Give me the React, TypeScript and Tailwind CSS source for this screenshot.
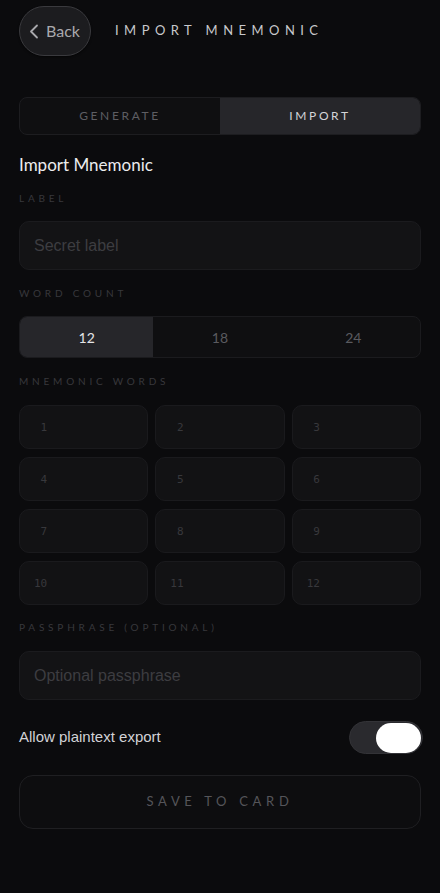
import React, { useState } from "react";

const HEAD = { fontFamily: "Lato, 'Noto Sans', sans-serif" };
const ARIAL = { fontFamily: "'Liberation Sans', Arial, sans-serif" };
const MONO = { fontFamily: "'DejaVu Sans Mono', 'Liberation Mono', monospace" };

function FieldLabel({ children }: { children: React.ReactNode }) {
  return (
    <div
      style={HEAD}
      className="text-[10px] leading-none tracking-[0.38em] text-[#38383c] uppercase"
    >
      {children}
    </div>
  );
}

export default function App() {
  const [mode, setMode] = useState<"generate" | "import">("import");
  const [count, setCount] = useState(12);
  const [plain, setPlain] = useState(true);

  return (
    <div className="min-h-[893px] w-[440px] bg-[#0b0b0d] px-[19px] pt-[6px]">
      {/* header */}
      <div className="flex items-center gap-[24px]">
        <button
          style={HEAD}
          className="flex h-[50px] w-[72px] items-center justify-center gap-[7px] rounded-full border border-[#3a3a3e] bg-[#1c1c1f] pr-[1px] text-[16px] text-[#a9a9ad] shadow-[0_1px_2px_rgba(0,0,0,0.6)]"
        >
          <svg width="10" height="15" viewBox="0 0 10 15" fill="none">
            <path d="M8 1.5 L2 7.5 L8 13.5" stroke="#a9a9ad" strokeWidth="1.8" strokeLinecap="round" strokeLinejoin="round" />
          </svg>
          Back
        </button>
        <div style={HEAD} className="text-[13px] tracking-[0.42em] text-[#c8c8cc]">
          IMPORT MNEMONIC
        </div>
      </div>

      {/* mode switch */}
      <div className="mt-[41px] grid h-[38px] grid-cols-2 overflow-hidden rounded-[8px] border border-[#1d1d20] bg-[#0f0f11]">
        <button
          onClick={() => setMode("generate")}
          style={HEAD}
          className={`text-[12px] tracking-[0.22em] ${mode === "generate" ? "bg-[#26262a] text-[#d4d4d8]" : "text-[#5e5e63]"}`}
        >
          GENERATE
        </button>
        <button
          onClick={() => setMode("import")}
          style={HEAD}
          className={`text-[12px] tracking-[0.22em] ${mode === "import" ? "bg-[#26262a] text-[#d4d4d8]" : "text-[#5e5e63]"}`}
        >
          IMPORT
        </button>
      </div>

      <div style={HEAD} className="mt-[21px] text-[17px] leading-none text-[#ececee]">
        Import Mnemonic
      </div>

      <div className="mt-[20px]">
        <FieldLabel>Label</FieldLabel>
      </div>
      <input
        placeholder="Secret label"
        style={ARIAL}
        className="mt-[18px] h-[49px] w-full rounded-[10px] border border-[#1b1b1e] bg-[#131315] px-[14px] text-[16px] text-[#d4d4d8] outline-none placeholder:text-[#3d3d41]"
      />

      <div className="mt-[18px]">
        <FieldLabel>Word count</FieldLabel>
      </div>
      <div className="mt-[18px] grid h-[42px] grid-cols-3 overflow-hidden rounded-[8px] border border-[#1b1b1e] bg-[#0f0f11]">
        {[12, 18, 24].map((n) => (
          <button
            key={n}
            onClick={() => setCount(n)}
            style={HEAD}
            className={`text-[14px] ${count === n ? "bg-[#26262a] text-[#e4e4e7]" : "text-[#5a5a5f]"}`}
          >
            {n}
          </button>
        ))}
      </div>

      <div className="mt-[18px]">
        <FieldLabel>Mnemonic words</FieldLabel>
      </div>
      <div className="mt-[19px] grid grid-cols-3 gap-x-[7px] gap-y-[8px]">
        {Array.from({ length: count }, (_, i) => (
          <input
            key={i}
            placeholder={String(i + 1).padStart(2, "\u00a0")}
            style={MONO}
            className="h-[44px] w-full rounded-[10px] border border-[#1a1a1d] bg-[#121214] px-[14px] text-[11px] text-[#d4d4d8] outline-none placeholder:text-[#38383c]"
          />
        ))}
      </div>

      <div className="mt-[17px]">
        <FieldLabel>Passphrase (optional)</FieldLabel>
      </div>
      <input
        placeholder="Optional passphrase"
        style={ARIAL}
        className="mt-[19px] h-[49px] w-full rounded-[10px] border border-[#1b1b1e] bg-[#131315] px-[14px] text-[16px] text-[#d4d4d8] outline-none placeholder:text-[#3d3d41]"
      />

      <div className="mt-[21px] flex items-center justify-between">
        <span style={ARIAL} className="text-[15px] text-[#d2d2d6]">
          Allow plaintext export
        </span>
        <button
          onClick={() => setPlain(!plain)}
          className={`mr-[-2px] flex h-[33px] w-[74px] items-center rounded-full border border-[#333337] bg-[#2a2a2e] p-[1px] ${plain ? "justify-end" : "justify-start"}`}
        >
          <span className="block h-[30px] w-[45px] rounded-full bg-white" />
        </button>
      </div>

      <button
        style={HEAD}
        className="mt-[21px] flex h-[54px] w-full items-center justify-center rounded-[14px] border border-[#1f1f22] bg-[#0d0d0f] text-[13px] tracking-[0.36em] text-[#55555a]"
      >
        SAVE TO CARD
      </button>
    </div>
  );
}
